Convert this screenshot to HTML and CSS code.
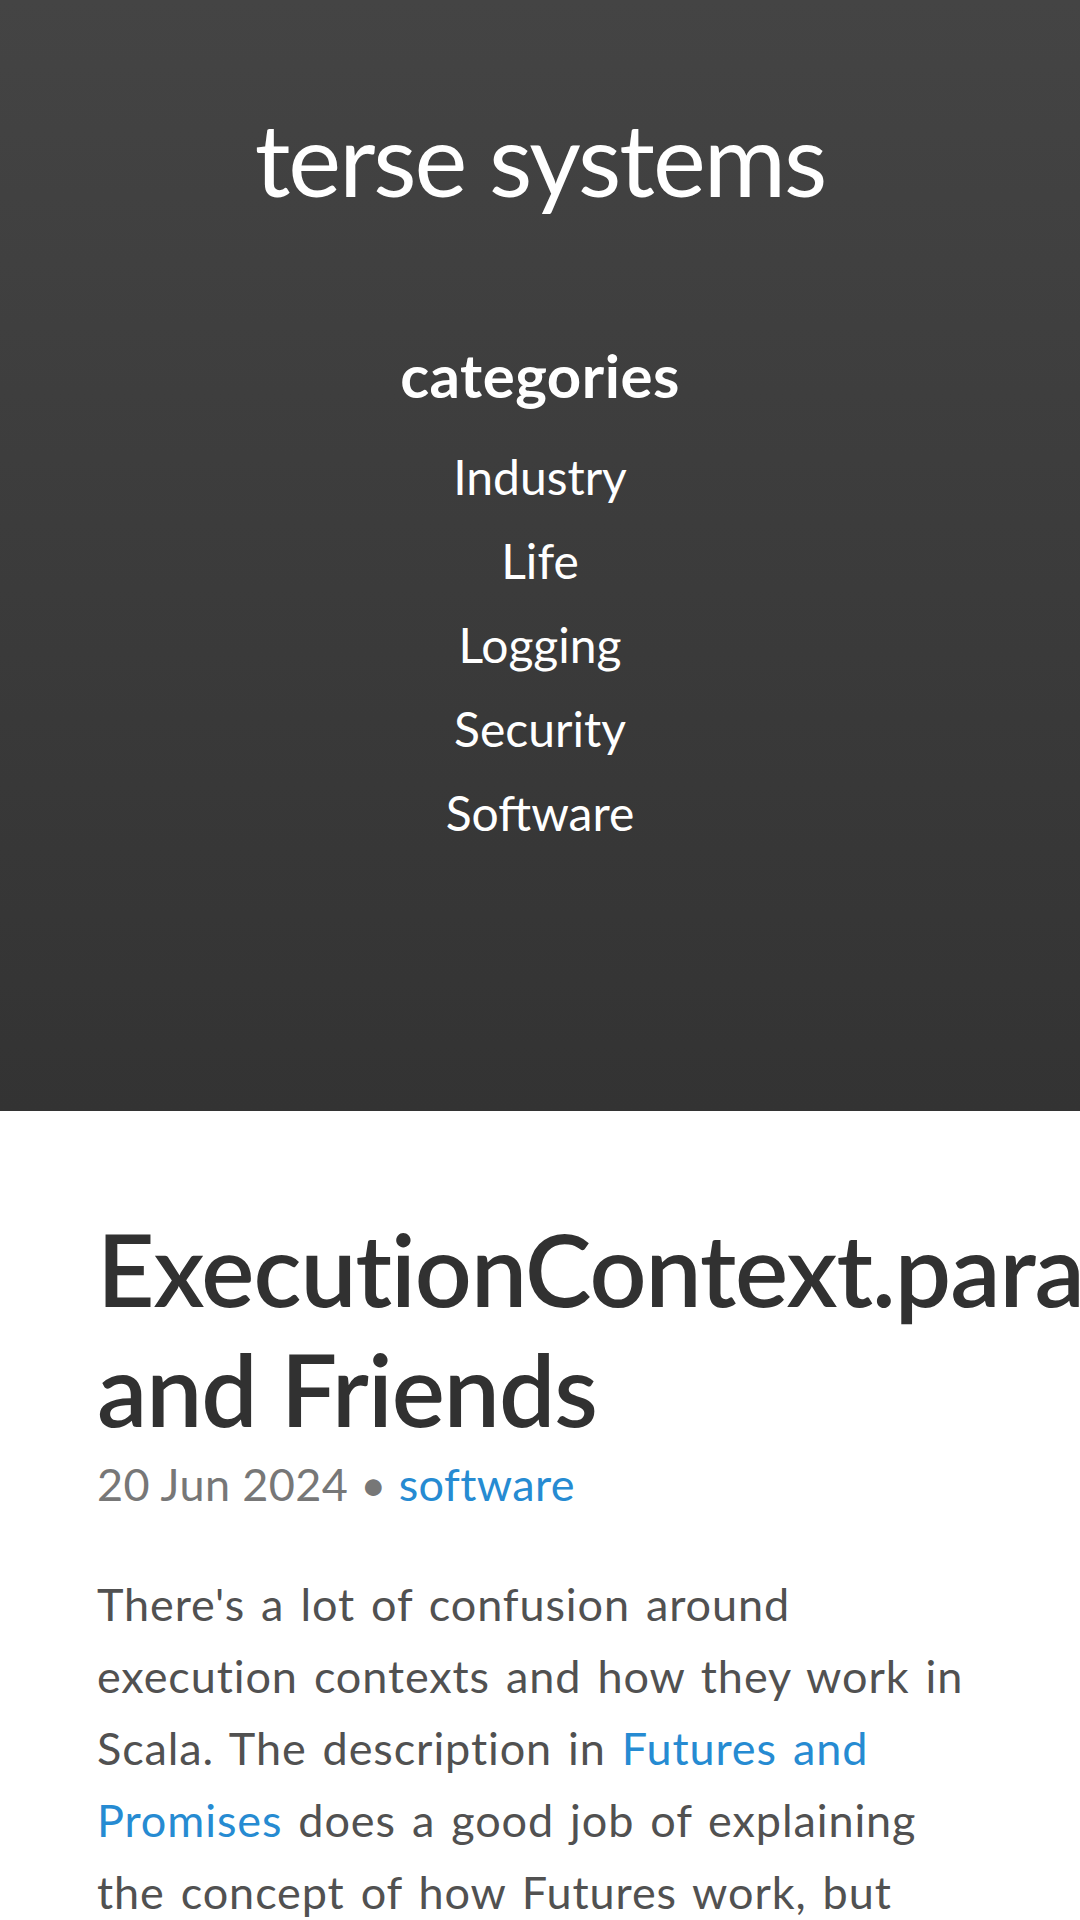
FILE: index.html
```html
<!DOCTYPE html>
<html lang="en">
<head>
    <meta charset="UTF-8">
    <meta name="viewport" content="width=device-width, initial-scale=1.0">
    <title>ExecutionContext.parasitic and Friends &middot; terse systems</title>
    <link rel="stylesheet" href="styles.css">
</head>
<body>
    <div class="sidebar">
        <div class="sidebar-inner">
            <h1 class="site-title"><a href="/">terse systems</a></h1>

            <nav class="sidebar-nav">
                <h2 class="sidebar-nav-heading">categories</h2>
                <a class="sidebar-nav-item" href="/category/industry/">Industry</a>
                <a class="sidebar-nav-item" href="/category/life/">Life</a>
                <a class="sidebar-nav-item" href="/category/logging/">Logging</a>
                <a class="sidebar-nav-item" href="/category/security/">Security</a>
                <a class="sidebar-nav-item" href="/category/software/">Software</a>
            </nav>
        </div>
    </div>

    <div class="content">
        <div class="post">
            <h1 class="post-title">ExecutionContext.parasitic and Friends</h1>
            <div class="post-date">20 Jun 2024 &bull; <a href="/category/software/">software</a></div>

            <p>There's a lot of confusion around execution contexts and how they work in Scala. The description in <a href="#">Futures and Promises</a> does a good job of explaining the concept of how Futures work, but doesn't go into much detail about which execution context to use and when.</p>
        </div>
    </div>
</body>
</html>
```

FILE: styles.css
```css
* {
    box-sizing: border-box;
    margin: 0;
    padding: 0;
}

html,
body {
    overflow-x: hidden;
}

body {
    font-family: Lato, "Open Sans", sans-serif;
    font-size: 45px;
    line-height: 1.6;
    color: #515151;
    background-color: #fff;
}

a {
    color: #268bd2;
    text-decoration: none;
}

/* Sidebar */

.sidebar {
    background: linear-gradient(to bottom, #444 0%, #333 100%);
    color: #fff;
    text-align: center;
    padding: 98px 97px 256px;
}

.sidebar a {
    color: #fff;
}

.site-title {
    font-size: 100px;
    font-weight: 400;
    line-height: 120px;
    letter-spacing: -2px;
}

.sidebar-nav {
    margin-top: 121px;
}

.sidebar-nav-heading {
    font-size: 60px;
    font-weight: 700;
    line-height: 72px;
    letter-spacing: 0.5px;
    margin-bottom: 24px;
}

.sidebar-nav-item {
    display: block;
    font-size: 48px;
    line-height: 84px;
}

/* Post */

.content {
    padding: 97px 97px 0;
}

.post-title {
    font-size: 100px;
    font-weight: 600;
    line-height: 120px;
    letter-spacing: -1px;
    color: #313131;
}

.post-date {
    color: #777;
    letter-spacing: 0.4px;
    margin-bottom: 48px;
}

.post p {
    letter-spacing: 0.9px;
    word-spacing: 3.6px;
    margin-bottom: 1em;
}
```
